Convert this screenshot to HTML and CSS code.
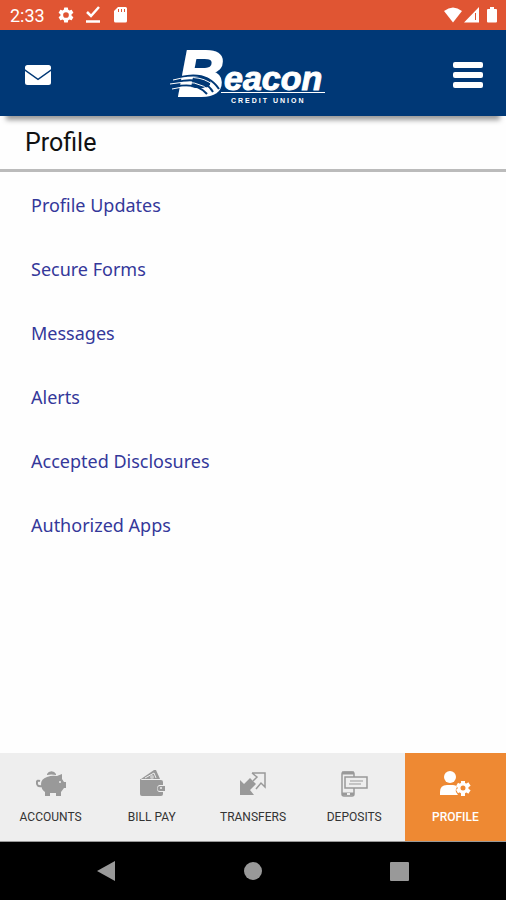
FILE: index.html
```html
<!DOCTYPE html>
<html lang="en">
<head>
    <meta charset="UTF-8">
    <meta name="viewport" content="width=device-width, initial-scale=1.0">
    <title>Beacon Credit Union - Profile</title>
    <link rel="stylesheet" href="styles.css">
</head>
<body>
    <!-- Status bar -->
    <div class="status-bar">
        <span class="clock">2:33</span>
        <svg width="18" height="18" viewBox="0 0 24 24" fill="currentColor"><path d="M19.4 13a7.500 7.500 0 0 0 0-2l2.200-1.700a.5.5 0 0 0 .1-.6l-2-3.500a.5.5 0 0 0-.6-.2l-2.500 1a7.300 7.300 0 0 0-1.700-1l-.4-2.600a.5.5 0 0 0-.5-.4h-4a.5.5 0 0 0-.5.4L9.100 5a7.700 7.700 0 0 0-1.700 1L4.900 5a.5.5 0 0 0-.6.2l-2 3.500a.5.5 0 0 0 .1.600L4.600 11a8 8 0 0 0 0 2l-2.200 1.700a.5.5 0 0 0-.1.600l2 3.500c.1.200.4.300.6.200l2.500-1c.5.400 1.100.7 1.700 1l.4 2.600c0 .2.200.4.500.4h4c.3 0 .5-.2.5-.4l.4-2.600c.6-.3 1.200-.6 1.700-1l2.500 1c.2.100.5 0 .6-.2l2-3.500a.5.5 0 0 0-.1-.6L19.400 13zM12 15.800a3.800 3.800 0 1 1 0-7.600 3.800 3.800 0 0 1 0 7.600z"/></svg>
        <svg width="18" height="18" viewBox="0 0 18 18" fill="none" stroke="currentColor" stroke-width="2.500"><path d="M3 6l4 4 8-9M2 15.500h14"/></svg>
        <svg width="18" height="18" viewBox="0 0 18 18" fill="currentColor"><path fill-rule="evenodd" d="M7 1h7.500A1.500 1.500 0 0 1 16 2.500v12.500a1.500 1.500 0 0 1-1.500 1.500h-10A1.500 1.500 0 0 1 3 15V5zM7 3v3h1V3zM10 3v3h1V3zM13 3v3h1V3z"/></svg>
        <div class="signals">
            <svg width="20" height="18" viewBox="0 0 20 18" fill="currentColor"><path d="M1 5Q10-2 19 5L10 16.500z"/></svg>
            <svg width="18" height="18" viewBox="0 0 18 18" fill="currentColor"><path fill-rule="evenodd" d="M16 1v15.500H1zM12 7v7h1V7z"/></svg>
            <svg width="14" height="18" viewBox="0 0 14 18" fill="currentColor"><path d="M5 1h4v2h2a1 1 0 0 1 1 1v11.500a1 1 0 0 1-1 1H3a1 1 0 0 1-1-1V4a1 1 0 0 1 1-1h2z"/></svg>
        </div>
    </div>

    <!-- Header -->
    <header>
        <button class="icon-button" type="button" aria-label="Messages">
            <svg width="26" height="20" viewBox="0 0 26 20" fill="#fff"><path d="M2.500 0h21A2.500 2.500 0 0 1 26 2.500v1.700L13 13.400 0 4.200V2.500A2.500 2.500 0 0 1 2.500 0z"/><path d="M0 6l13 9.200L26 6v11.500a2.500 2.500 0 0 1-2.500 2.500h-21A2.500 2.500 0 0 1 0 17.500z"/></svg>
        </button>
        <svg class="logo" width="168" height="76" viewBox="0 0 168 76" role="img" aria-label="Beacon Credit Union">
            <text class="logo-initial" x="10" y="59">B</text>
            <text class="logo-name" x="56" y="53">eacon</text>
            <path d="M13 40Q39 34 51 52M9 45Q35 39 45 55M6 50Q29 45 39 57" fill="none" stroke="#003876" stroke-width="2"/>
            <path d="M5 43Q35 35 49 52M2 47Q30 41 43 55M4 52Q26 46 36 57" fill="none" stroke="#fff" stroke-width="1"/>
            <path d="M53 55.500h104" stroke="#fff" stroke-width="1"/>
            <text class="logo-tag" x="63" y="66">CREDIT UNION</text>
        </svg>
        <button class="icon-button" type="button" aria-label="Menu">
            <svg width="32" height="28" viewBox="0 0 32 28" fill="#fff"><rect x="1" y="1" width="30" height="6" rx="2"/><rect x="1" y="11" width="30" height="6" rx="2"/><rect x="1" y="21" width="30" height="6" rx="2"/></svg>
        </button>
    </header>

    <h1>Profile</h1>

    <main>
        <a href="#">Profile Updates</a>
        <a href="#">Secure Forms</a>
        <a href="#">Messages</a>
        <a href="#">Alerts</a>
        <a href="#">Accepted Disclosures</a>
        <a href="#">Authorized Apps</a>
    </main>

    <!-- Tabs -->
    <nav class="tabs">
        <a href="#">
            <svg width="32" height="30" viewBox="0 0 32 30" fill="currentColor"><path d="M12 5a5 5 0 0 1 9 0v1q-5-1-9 0z"/><path d="M12 8q5-2 10-1l5-2v5l2 3h2v6h-2l-3 4v4h-5v-3h-6v3h-5v-4q-4-3-4-8 0-5 6-7z"/><path d="M7 17Q1 18 2 13q0-2 3-1" fill="none" stroke="currentColor" stroke-width="2"/><circle cx="25" cy="13" r="1" fill="#eee"/></svg>
            <span>ACCOUNTS</span>
        </a>
        <a href="#">
            <svg width="32" height="30" viewBox="0 0 32 30" fill="currentColor"><path d="M5 10L18 1h2l4 9z"/><path d="M9 9l9-5 2 5" fill="none" stroke="#eee" stroke-width="1"/><circle cx="16" cy="8" r="2" fill="#ccc"/><path d="M4 10l2 1h19q2 0 2 2v3h-4a4 4 0 0 0 0 7h4v2a2 2 0 0 1-2 2H6a2 2 0 0 1-2-2z"/><path d="M24 17h5v5h-5a2 2 0 0 1 0-5z"/><circle cx="25" cy="19" r="1" fill="#eee"/></svg>
            <span>BILL PAY</span>
        </a>
        <a href="#">
            <svg width="32" height="30" viewBox="0 0 32 30" fill="currentColor"><path d="M3 11l4 4 6-6 6 6-6 6 4 5H3z"/><path d="M15 4h13v14l-4-4-5 6M15 4l5 4-4 4" fill="none" stroke="currentColor" stroke-width="1.500"/></svg>
            <span>TRANSFERS</span>
        </a>
        <a href="#">
            <svg width="32" height="30" viewBox="0 0 32 30" fill="none" stroke="currentColor"><rect x="4" y="3" width="12" height="24" rx="2" stroke-width="1.500"/><path d="M4 4h12M4 25h12" stroke-width="3"/><rect x="7" y="8" width="22" height="11" fill="#eee" stroke-width="1.500"/><path d="M12 12h13M11 15h12" stroke-width="1"/><path d="M9 25h3" stroke="#eee" stroke-width="2"/></svg>
            <span>DEPOSITS</span>
        </a>
        <a href="#" class="active">
            <svg width="32" height="30" viewBox="0 0 32 30" fill="currentColor"><circle cx="11" cy="8" r="6"/><path d="M1 26v-3q0-7 7-7h6q3 0 4 2-2 3-1 5l2 3z"/><circle cx="24" cy="19" r="4" fill="none" stroke="currentColor" stroke-width="3"/><path d="M24 12v3M24 23v4M18 15.500l2.500 1.500M27.500 21l3 2M18 22.500l2.500-1.500M27.500 17l3-2" stroke="currentColor" stroke-width="4"/></svg>
            <span>PROFILE</span>
        </a>
    </nav>

    <!-- System buttons -->
    <div class="system-bar">
        <button type="button" aria-label="Back"><svg width="20" height="22" viewBox="0 0 20 22"><path d="M1 11L19 1v20z"/></svg></button>
        <button type="button" aria-label="Home"><svg width="20" height="22" viewBox="0 0 20 22"><circle cx="10" cy="11" r="9"/></svg></button>
        <button type="button" aria-label="Recent apps"><svg width="20" height="22" viewBox="0 0 20 22"><rect x="0" y="2" width="19" height="19" rx="1"/></svg></button>
    </div>
</body>
</html>
```
FILE: styles.css
```css
* {
    box-sizing: border-box;
}

body {
    margin: 0;
    min-height: 100vh;
    display: flex;
    flex-direction: column;
    background-color: #fefefe;
    font-family: Roboto, sans-serif;
}

a {
    text-decoration: none;
}

button {
    padding: 0;
    border: none;
    background: none;
    cursor: pointer;
}

svg {
    display: block;
}

/* Status bar */
.status-bar {
    height: 30px;
    padding: 0 7px 0 10px;
    display: flex;
    align-items: center;
    gap: 9px;
    background-color: #e05533;
    color: #fff;
}

.clock {
    margin-right: 3px;
    font-size: 18px;
}

.signals {
    display: flex;
    margin-left: auto;
}

.signals svg:last-child {
    margin-left: 4px;
}

/* Header */
header {
    height: 86px;
    padding: 4px 22px 0 25px;
    display: flex;
    justify-content: space-between;
    align-items: center;
    background-color: #003876;
    box-shadow: 0 10px 5px -6px #999;
}

.logo {
    fill: #fff;
    font-family: "Liberation Sans", sans-serif;
    font-weight: bold;
}

.logo-initial {
    font-size: 64px;
    font-style: italic;
    stroke: #fff;
    stroke-width: 2px;
}

.logo-name {
    font-size: 34px;
    font-style: italic;
    stroke: #fff;
    stroke-width: 1px;
}

.logo-tag {
    font-size: 7px;
    letter-spacing: 2px;
}

/* Page title */
h1 {
    margin: 0;
    padding: 11px 25px 10px;
    border-bottom: 3px solid #bbb;
    color: #111;
    font-size: 25px;
    font-weight: 400;
    line-height: 32px;
}

/* Profile links */
main {
    flex: 1;
    padding-top: 1px;
    display: flex;
    flex-direction: column;
}

main a {
    padding: 0 31px;
    color: #34389a;
    font-family: "Noto Sans", sans-serif;
    font-size: 18px;
    line-height: 64px;
}

/* Tabs */
.tabs {
    display: flex;
    background-color: #eee;
    border-bottom: 1px solid #999;
}

.tabs a {
    flex: 1;
    height: 88px;
    padding-top: 16px;
    display: flex;
    flex-direction: column;
    align-items: center;
    gap: 10px;
    color: #999;
}

.tabs span {
    color: #333;
    font-size: 12px;
    line-height: 16px;
}

.tabs .active {
    background-color: #ee8933;
    color: #fff;
}

.tabs .active span {
    color: #fff;
    font-weight: 500;
}

/* System buttons */
.system-bar {
    height: 58px;
    padding: 0 33px;
    display: flex;
    background-color: #000;
}

.system-bar button {
    flex: 1;
    display: flex;
    justify-content: center;
    align-items: center;
    fill: #999;
}
```
